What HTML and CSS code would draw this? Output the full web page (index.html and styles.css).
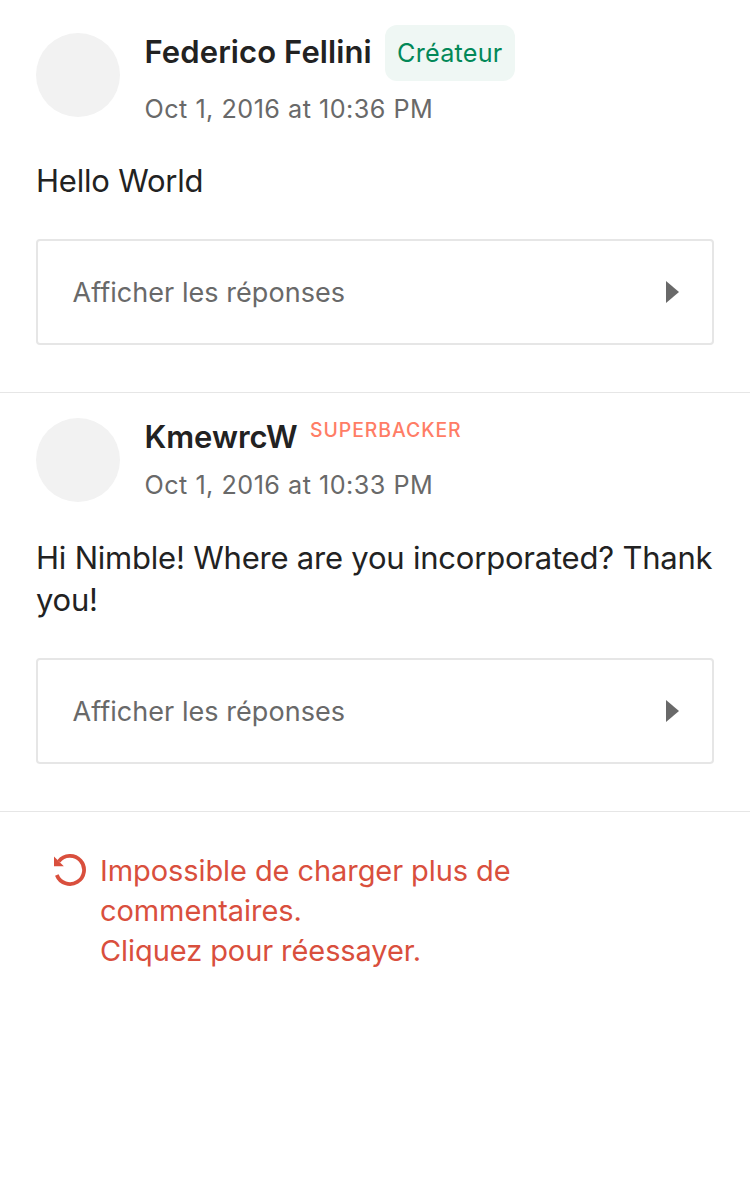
FILE: index.html
```html
<!DOCTYPE html>
<html lang="fr">
<head>
<meta charset="utf-8">
<title>Commentaires</title>
<link rel="stylesheet" href="styles.css">
</head>
<body>
<main>
  <article class="comment">
    <header class="head">
      <div class="avatar"></div>
      <div class="meta">
        <div class="name-row creator-row">
          <span class="name name-creator">Federico Fellini</span>
          <span class="creator"><span class="creator-label">Créateur</span></span>
        </div>
        <div class="date date-creator">Oct 1, 2016 at 10:36 PM</div>
      </div>
    </header>
    <p class="body"><span class="line">Hello World</span></p>
    <div class="replies">
      <span class="replies-label">Afficher les réponses</span>
      <svg class="arrow" width="13" height="22" viewBox="0 0 13 22"><path d="M0 0L13 11L0 22Z" fill="#696969"/></svg>
    </div>
  </article>
  <article class="comment">
    <header class="head">
      <div class="avatar"></div>
      <div class="meta">
        <div class="name-row">
          <span class="name name-backer">KmewrcW</span>
          <span class="superbacker">SUPERBACKER</span>
        </div>
        <div class="date">Oct 1, 2016 at 10:33 PM</div>
      </div>
    </header>
    <p class="body"><span class="line">Hi Nimble! Where are you incorporated? Thank</span><span class="line">you!</span></p>
    <div class="replies">
      <span class="replies-label">Afficher les réponses</span>
      <svg class="arrow" width="13" height="22" viewBox="0 0 13 22"><path d="M0 0L13 11L0 22Z" fill="#696969"/></svg>
    </div>
  </article>
  <div class="retry">
    <svg class="retry-icon" width="34" height="34" viewBox="0 0 34 34"><path d="M5.8 8.3A14.1 14.1 0 1 1 3.8 22" fill="none" stroke="#d94f3d" stroke-width="3.8"/><path d="M1 3.6L1 13.2L10.8 13.2Z" fill="#d94f3d"/></svg>
    <p class="retry-text"><span class="line">Impossible de charger plus de</span><span class="line">commentaires.</span><span class="line">Cliquez pour réessayer.</span></p>
  </div>
</main>
</body>
</html>
```
FILE: styles.css
```css
body {
  margin: 0;
  background: #fff;
  color: #222;
  font-family: Inter, "Liberation Sans", sans-serif;
}
p { margin: 0; }
.comment {
  padding: 25px 36px 47px;
  border-bottom: 1px solid #e6e6e6;
}
.head { display: flex; gap: 24.5px; }
.avatar {
  width: 84px;
  height: 84px;
  border-radius: 50%;
  background: #f2f2f2;
}
.comment:first-child .avatar { margin-top: 8px; }
.name-row {
  display: flex;
  align-items: flex-start;
  height: 37px;
  white-space: nowrap;
}
.creator-row { height: 56px; }
.name {
  font-size: 31px;
  line-height: 38px;
  font-weight: 600;
}
.name-creator { width: 226.5px; margin-top: 8px; letter-spacing: 0.1px; }
.name-backer { width: 151.5px; letter-spacing: -0.05px; }
.creator {
  box-sizing: border-box;
  width: 130px;
  height: 56px;
  margin-left: 14px;
  padding-left: 12px;
  border-radius: 12px;
  background: #eff7f4;
}
.creator-label {
  display: block;
  font-size: 25.2px;
  line-height: 56px;
  letter-spacing: 0.25px;
  color: #028858;
}
.superbacker {
  margin-left: 14px;
  font-size: 19.4px;
  line-height: 24px;
  font-weight: 500;
  letter-spacing: 0.95px;
  color: #ff7d66;
}
.date {
  margin-top: 14px;
  font-size: 25.2px;
  line-height: 32px;
  letter-spacing: 0.48px;
  color: #696969;
  white-space: nowrap;
}
.date-creator { margin-top: 12px; }
.body {
  margin: 35px 0 37px;
  font-size: 31px;
  line-height: 42px;
  letter-spacing: -0.21px;
}
.line { display: block; white-space: nowrap; }
.replies {
  display: flex;
  align-items: center;
  justify-content: space-between;
  box-sizing: border-box;
  height: 106px;
  padding: 0 33.5px 0 34.5px;
  border: 2px solid #e6e6e6;
  border-radius: 4px;
}
.replies-label {
  padding-top: 1px;
  font-size: 27px;
  line-height: 34px;
  letter-spacing: 0.05px;
  color: #696969;
}
.retry {
  display: flex;
  padding: 38.5px 53px;
  color: #d94f3d;
}
.retry-icon { margin: 2.5px 13px 0 0; }
.retry-text { font-size: 29px; line-height: 40px; letter-spacing: -0.08px; }
```
